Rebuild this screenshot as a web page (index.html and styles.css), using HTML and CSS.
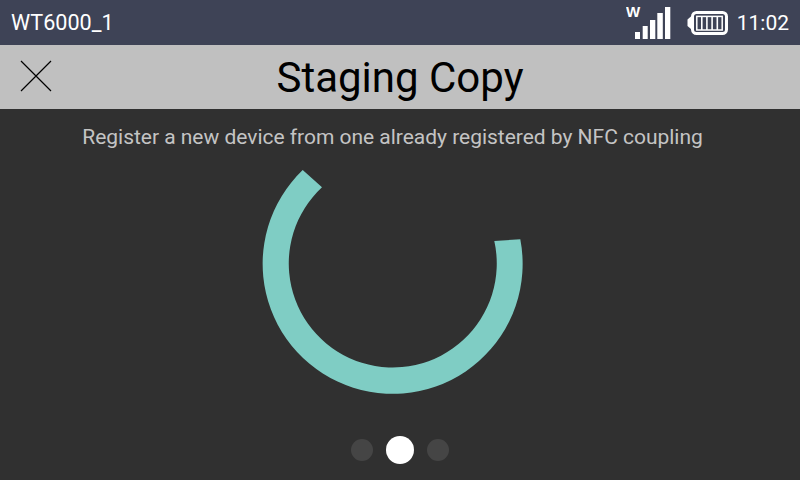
FILE: index.html
```html
<!DOCTYPE html>
<html lang="en">
<head>
<meta charset="utf-8">
<title>Staging Copy</title>
<link rel="stylesheet" href="styles.css">
</head>
<body>
<div class="screen">
  <header class="status">
    <span class="device">WT6000_1</span>
    <div class="status-right">
      <svg class="signal" width="45" height="45" viewBox="0 0 45 45">
        <text x="0" y="17" class="wifi-w">W</text>
        <rect x="9" y="32" width="5" height="7" fill="#fff"/>
        <rect x="16.7" y="26" width="5" height="13" fill="#fff"/>
        <rect x="24" y="20" width="5.3" height="19" fill="#fff"/>
        <rect x="31.3" y="13" width="5.5" height="26" fill="#fff"/>
        <rect x="39" y="7" width="5.3" height="32" fill="#fff"/>
      </svg>
      <svg class="battery" width="42" height="29" viewBox="0 0 42 29">
        <path d="M4.5 8 L0.5 11.5 V18 L4.5 21.5 Z" fill="#fff"/>
        <rect x="5.5" y="4.5" width="34" height="21" rx="4" fill="none" stroke="#fff" stroke-width="3"/>
        <rect x="9.8" y="8.4" width="25.4" height="13.6" fill="none" stroke="#fff" stroke-width="1.5"/>
        <g fill="#fff">
          <rect x="14" y="8" width="1.6" height="14"/>
          <rect x="19.1" y="8" width="1.6" height="14"/>
          <rect x="24.3" y="8" width="1.6" height="14"/>
          <rect x="29.5" y="8" width="1.6" height="14"/>
        </g>
      </svg>
      <span class="clock">11:02</span>
    </div>
  </header>
  <div class="titlebar">
    <svg class="close" width="32" height="32" viewBox="0 0 32 32">
      <path d="M1 1 L31 31 M31 1 L1 31" stroke="#000" stroke-width="1.2" fill="none"/>
    </svg>
    <h1 class="title">Staging Copy</h1>
  </div>
  <main class="content">
    <p class="subtitle">Register a new device from one already registered by NFC coupling</p>
    <svg class="ring" width="261" height="226" viewBox="0 0 261 226">
      <path d="M40.7 1 A130 130 0 1 0 258.3 70.3 L232.3 72 A104 104 0 1 1 60 18.3 Z" fill="#7fcdc4"/>
    </svg>
    <div class="dots">
      <span class="dot"></span>
      <span class="dot active"></span>
      <span class="dot"></span>
    </div>
  </main>
</div>
</body>
</html>
```
FILE: styles.css
```css
* { box-sizing: border-box; }
html, body { margin: 0; padding: 0; }
body { width: 800px; height: 480px; overflow: hidden; font-family: Roboto, sans-serif; background: #303030; }
.screen { width: 800px; height: 480px; display: flex; flex-direction: column; }
.status { height: 45px; flex: none; background: #3e4356; color: #fff; display: flex; align-items: center; justify-content: space-between; padding: 0 11px 0 11px; }
.device { font-size: 21.6px; }
.status-right { display: flex; align-items: center; }
.signal { margin-right: 16px; }
.wifi-w { font-family: "Liberation Sans", sans-serif; font-weight: 700; font-size: 15px; fill: #fff; }
.battery { margin-right: 8px; }
.clock { font-size: 21px; }
.titlebar { height: 64px; flex: none; background: #c0c0c0; position: relative; display: flex; align-items: center; justify-content: center; }
.close { position: absolute; left: 20px; top: 15px; }
.title { margin: 0; font-size: 42px; font-weight: 400; color: #000; }
.content { flex: 1; display: flex; flex-direction: column; align-items: center; }
.subtitle { margin: 16px 0 0 -15px; font-size: 21px; letter-spacing: -0.02px; line-height: 24px; color: #c4c4c4; }
.ring { margin: 20px 0 0 -15px; flex: none; }
.dots { margin-top: 41px; display: flex; align-items: center; gap: 13px; }
.dot { width: 22px; height: 22px; border-radius: 50%; background: #454545; }
.dot.active { width: 28px; height: 28px; background: #fff; }
```
